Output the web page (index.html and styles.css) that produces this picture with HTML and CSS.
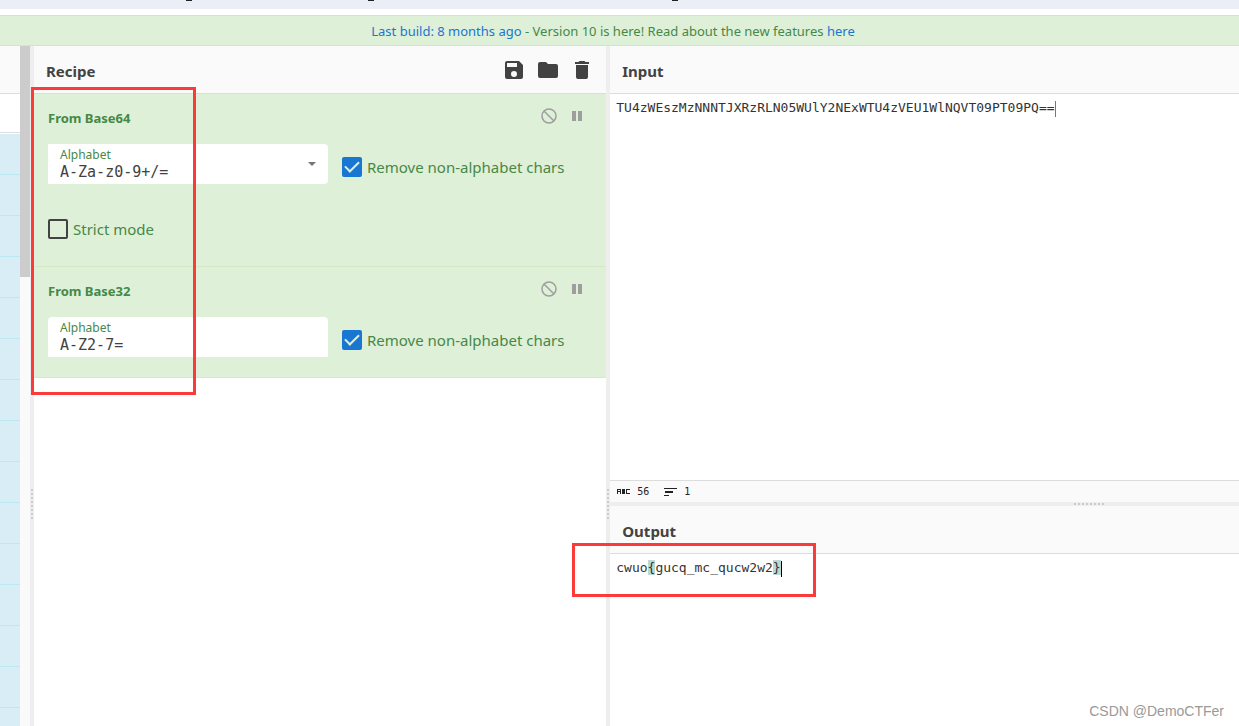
FILE: index.html
```html
<!DOCTYPE html>
<html lang="en">
<head>
<meta charset="utf-8">
<meta name="viewport" content="width=device-width, initial-scale=1">
<title>CyberChef</title>
<link rel="stylesheet" href="styles.css">
</head>
<body>
<div class="browser-strip"><i class="descender d1"></i><i class="descender d2"></i><i class="descender d3"></i></div>
<header class="banner">
  <p><a href="#changelog">Last build: 8 months ago</a> - Version 10 is here! Read about the new features <a href="#features">here</a></p>
</header>
<main class="workspace">
  <aside class="operations">
    <div class="op-title"></div>
    <div class="op-search"></div>
    <ul class="op-list">
      <li></li><li></li><li></li><li></li><li></li><li></li><li></li><li></li><li></li><li></li><li></li><li></li><li></li><li></li><li></li>
    </ul>
  </aside>
  <div class="scrollbar"><div class="thumb"></div></div>
  <div class="gutter"><span class="grip"></span></div>
  <section class="recipe">
    <div class="title">
      <h2>Recipe</h2>
      <div class="tools">
        <button type="button" aria-label="Save recipe"><svg viewBox="0 0 24 24"><path d="M17 3H5a2 2 0 0 0-2 2v14a2 2 0 0 0 2 2h14a2 2 0 0 0 2-2V7l-4-4zm-5 16a3 3 0 1 1 0-6 3 3 0 0 1 0 6zm3-10H5V5h10v4z"/></svg></button>
        <button type="button" aria-label="Load recipe"><svg viewBox="0 0 24 24"><path d="M10 4H4a2 2 0 0 0-2 2v12a2 2 0 0 0 2 2h16a2 2 0 0 0 2-2V8a2 2 0 0 0-2-2h-8l-2-2z"/></svg></button>
        <button type="button" aria-label="Clear recipe"><svg viewBox="0 0 24 24"><path d="M6 19a2 2 0 0 0 2 2h8a2 2 0 0 0 2-2V7H6v12zM19 4h-3.500l-1-1h-5l-1 1H5v2h14V4z"/></svg></button>
      </div>
    </div>
    <article class="operation tall">
      <div class="op-head">
        <h3>From Base64</h3>
        <div class="op-tools">
          <button type="button" aria-label="Disable"><svg viewBox="0 0 18 18"><circle cx="9" cy="9" r="7" fill="none" stroke="currentColor" stroke-width="1.500"/><path d="M4 4l10 10" stroke="currentColor" stroke-width="1.500"/></svg></button>
          <button type="button" aria-label="Breakpoint"><svg viewBox="0 0 18 18"><path d="M4 4h4v10H4zM10 4h4v10h-4z"/></svg></button>
        </div>
      </div>
      <div class="args">
        <div class="field combo">
          <div class="field-text"><label for="alpha64">Alphabet</label><input id="alpha64" type="text" value="A-Za-z0-9+/="></div>
          <button type="button" class="caret" aria-label="Choose alphabet"></button>
        </div>
        <label class="check"><input type="checkbox" checked><span>Remove non-alphabet chars</span></label>
      </div>
      <label class="check strict"><input type="checkbox"><span>Strict mode</span></label>
    </article>
    <article class="operation">
      <div class="op-head">
        <h3>From Base32</h3>
        <div class="op-tools">
          <button type="button" aria-label="Disable"><svg viewBox="0 0 18 18"><circle cx="9" cy="9" r="7" fill="none" stroke="currentColor" stroke-width="1.500"/><path d="M4 4l10 10" stroke="currentColor" stroke-width="1.500"/></svg></button>
          <button type="button" aria-label="Breakpoint"><svg viewBox="0 0 18 18"><path d="M4 4h4v10H4zM10 4h4v10h-4z"/></svg></button>
        </div>
      </div>
      <div class="args">
        <div class="field plain">
          <div class="field-text"><label for="alpha32">Alphabet</label><input id="alpha32" type="text" value="A-Z2-7="></div>
        </div>
        <label class="check"><input type="checkbox" checked><span>Remove non-alphabet chars</span></label>
      </div>
    </article>
  </section>
  <div class="gutter"><span class="grip"></span></div>
  <div class="io">
    <section class="input-pane">
      <div class="title"><h2>Input</h2></div>
      <div class="editor" role="textbox" aria-label="Input" contenteditable="true" spellcheck="false">TU4zWEszMzNNNTJXRzRLN05WUlY2NExWTU4zVEU1WlNQVT09PT09PQ==<span class="cursor soft"></span></div>
      <footer class="status">
        <svg class="abc" viewBox="0 0 13 5"><path d="M0 0h4v5H3V3H1v2H0zM1 1v1h2V1zM5 0h3v5H5zM9 0h4v1h-3v3h3v1H9z" fill-rule="evenodd"/></svg><span>56</span>
        <svg class="lines" viewBox="0 0 13 8"><path d="M0 0h13v1H0zM1 3h8v2H1zM0 7h5v1H0z"/></svg><span>1</span>
      </footer>
    </section>
    <div class="gutter-h"><span class="grip-h"></span></div>
    <section class="output-pane">
      <div class="title"><h2>Output</h2></div>
      <div class="editor" role="textbox" aria-label="Output" aria-readonly="true">cwuo<mark>{</mark>gucq_mc_qucw2w2<mark>}</mark><span class="cursor"></span></div>
    </section>
  </div>
</main>
<div class="highlight recipe-box"></div>
<div class="highlight output-box"></div>
<div class="watermark">CSDN @DemoCTFer</div>
</body>
</html>
```
FILE: styles.css
```css
* { box-sizing: border-box; }
body {
  margin: 0;
  height: 100vh;
  display: flex;
  flex-direction: column;
  overflow: hidden;
  position: relative;
  background: #fff;
  color: #424242;
  font-family: "Segoe UI", "Noto Sans", "Open Sans", sans-serif;
}
h2, h3, p, ul { margin: 0; padding: 0; }
button { padding: 0; border: 0; background: none; color: inherit; cursor: pointer; }
a { color: #1976d2; text-decoration: none; }
svg { display: block; fill: currentColor; }

.browser-strip { position: relative; flex: none; height: 9px; margin-bottom: 6px; background: #ebedf7; }
.descender { position: absolute; top: 0; width: 6px; height: 1px; background: #222; }
.d1 { left: 186px; }
.d2 { left: 368px; }
.d3 { left: 672px; }

.banner {
  flex: none;
  height: 31px;
  border: solid #ddd;
  border-width: 1px 0;
  background: #dff0d8;
  color: #468847;
  font-size: 13px;
  line-height: 31px;
  text-align: center;
}
.banner p { padding-right: 13px; }

.workspace { flex: 1; min-height: 0; display: flex; }
.operations { flex: none; width: 20px; overflow: hidden; }
.op-title { height: 48px; background: #fafafa; border-bottom: 1px solid #ddd; }
.op-search { height: 39px; margin-bottom: 1px; border-bottom: 1px solid #ddd; }
.op-list { list-style: none; }
.op-list li { height: 41px; background: #d9edf7; border-bottom: 1px solid #bce8f1; }
.scrollbar { flex: none; width: 10px; background: #fafafa; }
.thumb { height: 34%; background: #ccc; }
.gutter { flex: none; width: 4px; display: flex; align-items: center; justify-content: center; background: #eee; }
.grip { width: 2px; height: 30px; margin-top: 236px; background: repeating-linear-gradient(#ccc 0 2px, transparent 2px 4px); }

.recipe { flex: 476 1 0; min-width: 0; }
.io { flex: 523 1 0; min-width: 0; display: flex; flex-direction: column; }
.title {
  flex: none;
  height: 48px;
  display: flex;
  align-items: center;
  justify-content: space-between;
  padding: 2px 12px 0;
  background: #fafafa;
  border-bottom: 1px solid #ddd;
}
.title h2 { font-size: 15px; line-height: 20px; font-weight: 700; }
.tools { display: flex; gap: 10px; padding-bottom: 2px; }
.tools svg { width: 24px; height: 24px; }

.operation { padding: 12px 14px 20px; background: #dff0d8; border-bottom: 1px solid #d6e9c6; color: #468847; }
.operation.tall { padding-bottom: 26px; }
.op-head { display: flex; justify-content: space-between; height: 24px; }
.op-head h3 { font-size: 13px; line-height: 24px; font-weight: 700; }
.op-tools { display: flex; gap: 10px; padding-right: 6px; color: #9e9e9e; }
.op-tools button { height: 20px; }
.op-tools svg { width: 18px; height: 18px; }
.args { display: flex; gap: 14px; margin-top: 14px; }
.field { display: flex; align-items: center; width: 280px; height: 40px; padding: 0 12px; background: #fff; }
.combo { border-radius: 0 4px 4px 0; }
.plain { border-radius: 4px 4px 0 0; }
.field-text { flex: 1; min-width: 0; display: flex; flex-direction: column; }
.field label { font-size: 12px; line-height: 16px; }
.field input {
  width: 100%;
  height: 18px;
  padding: 0;
  border: 0;
  outline: 0;
  background: none;
  color: #424242;
  font: 15px/18px Consolas, "DejaVu Sans Mono", monospace;
}
.caret { width: 8px; height: 4px; background: #757575; clip-path: polygon(0 0, 100% 0, 50% 100%); }
.check { display: flex; align-items: center; gap: 5px; font-size: 15px; line-height: 22px; white-space: nowrap; }
.check input {
  appearance: none;
  flex: none;
  width: 20px;
  height: 20px;
  margin: 0;
  border: 2px solid #424242;
  border-radius: 2px;
  display: grid;
  place-items: center;
}
.args .check { padding-top: 6px; }
.check input:checked { background: #1976d2; border-color: #1976d2; }
.check input:checked::before {
  content: "";
  width: 12px;
  height: 6px;
  margin-bottom: 4px;
  border: solid #dff0d8;
  border-width: 0 0 2px 2px;
  transform: rotate(-45deg);
}
.strict { margin-top: 34px; }

.input-pane { flex: 456 1 0; min-height: 0; display: flex; flex-direction: column; }
.output-pane { flex: 220 1 0; min-height: 0; display: flex; flex-direction: column; }
.editor {
  flex: 1;
  min-height: 0;
  padding: 5px 6px;
  outline: 0;
  color: #333;
  font: 13px/18px Consolas, "DejaVu Sans Mono", monospace;
  white-space: nowrap;
}
.editor mark { background: #bad9d4; color: inherit; }
.cursor { display: inline-block; width: 1px; height: 16px; vertical-align: middle; background: #000; }
.cursor.soft { background: #777; }
.status {
  flex: none;
  display: flex;
  align-items: center;
  height: 22px;
  padding: 0 7px;
  border-top: 1px solid #ddd;
  background: #fafafa;
  color: #222;
  font: 10px/20px "DejaVu Sans Mono", monospace;
}
.abc { width: 13px; height: 5px; margin-right: 7px; }
.lines { width: 13px; height: 8px; margin: 0 7px 0 15px; }
.gutter-h { flex: none; height: 4px; display: flex; align-items: center; justify-content: center; background: #eee; }
.grip-h { width: 30px; height: 2px; margin-left: 329px; background: repeating-linear-gradient(90deg, #ccc 0 2px, transparent 2px 4px); }

.highlight { position: absolute; border: 3px solid #fc3a3a; pointer-events: none; }
.recipe-box { left: 31px; top: 87px; width: 165px; height: 308px; }
.output-box { left: 572px; top: 543px; width: 244px; height: 54px; }
.watermark { position: absolute; right: 15px; bottom: 6px; color: #999; font: 14px/18px "Liberation Sans", sans-serif; }
```
